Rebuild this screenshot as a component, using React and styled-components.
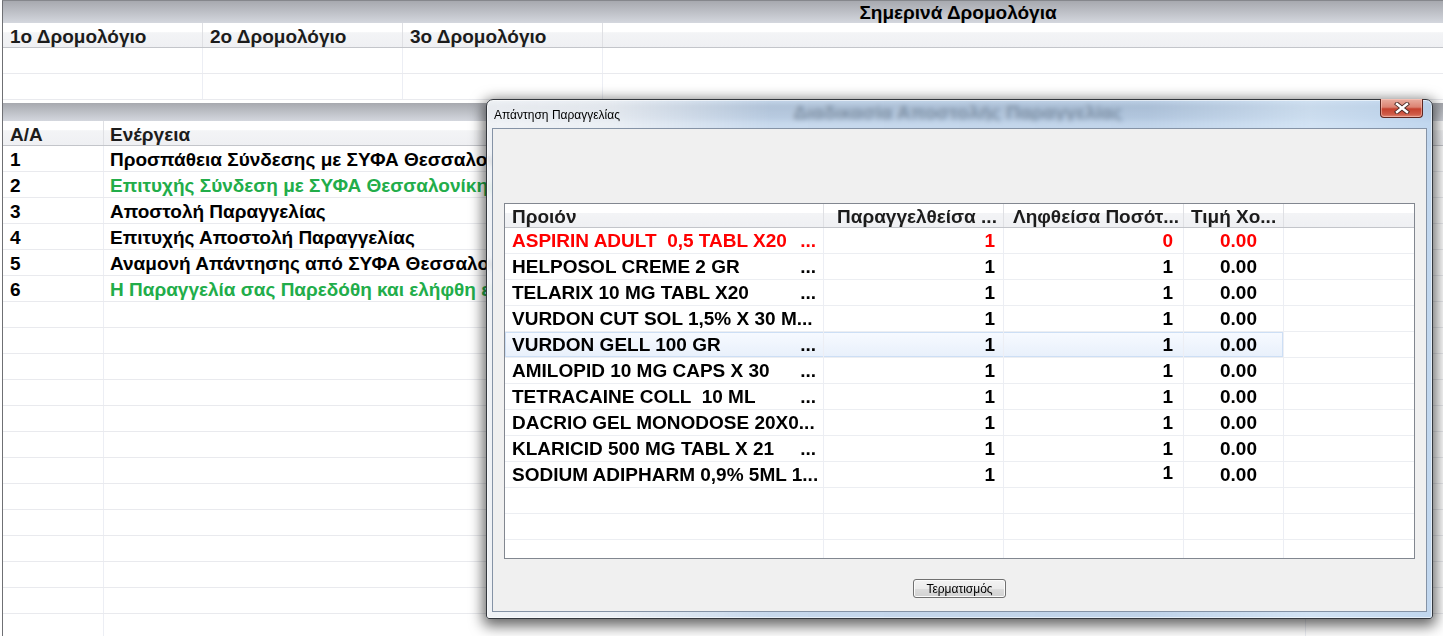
import React from "react";
import styled, { createGlobalStyle } from "styled-components";

const FONT = `"Liberation Sans", Arial, "DejaVu Sans", sans-serif`;

const GlobalStyle = createGlobalStyle`
  html, body {
    margin: 0;
    padding: 0;
    background: #fff;
    overflow: hidden;
  }
  body {
    font-family: ${FONT};
    color: #000;
  }
  * {
    box-sizing: border-box;
  }
`;

const routes = ["1ο Δρομολόγιο", "2ο Δρομολόγιο", "3ο Δρομολόγιο", ""];

const steps = [
  { n: 1, text: "Προσπάθεια Σύνδεσης με ΣΥΦΑ Θεσσαλονίκης" },
  { n: 2, text: "Επιτυχής Σύνδεση με ΣΥΦΑ Θεσσαλονίκης", ok: true },
  { n: 3, text: "Αποστολή Παραγγελίας" },
  { n: 4, text: "Επιτυχής Αποστολή Παραγγελίας" },
  { n: 5, text: "Αναμονή Απάντησης από ΣΥΦΑ Θεσσαλονίκης" },
  { n: 6, text: "Η Παραγγελία σας Παρεδόθη και ελήφθη επιτυχώς", ok: true },
];

const products = [
  { name: "ASPIRIN ADULT  0,5 TABL X20", pad: true, got: 0, red: true },
  { name: "HELPOSOL CREME 2 GR", pad: true },
  { name: "TELARIX 10 MG TABL X20", pad: true },
  { name: "VURDON CUT SOL 1,5% X 30 M..." },
  { name: "VURDON GELL 100 GR", pad: true, sel: true },
  { name: "AMILOPID 10 MG CAPS X 30", pad: true },
  { name: "TETRACAINE COLL  10 ML", pad: true },
  { name: "DACRIO GEL MONODOSE 20X0..." },
  { name: "KLARICID 500 MG TABL X 21", pad: true },
  { name: "SODIUM ADIPHARM 0,9% 5ML 1...", lift: true },
];

const TOP_COLS = "200px 200px 200px 1fr";
const LOG_COLS = "101px 1202px 1fr";
const DLG_COLS = "319px 180px 180px 100px 1fr";

const Screen = styled.div`
  position: relative;
  width: 1443px;
  height: 636px;
  overflow: hidden;
  background: #fff;
`;

const Page = styled.div`
  width: 1911px;
  height: 636px;
  margin-left: 2px;
  border-left: 1px solid #6f7074;
  border-top: 1px solid #85878c;
  display: flex;
  flex-direction: column;
`;

const PanelBar = styled.div`
  flex: none;
  height: ${(p) => p.$h}px;
  margin-top: ${(p) => p.$gap || 0}px;
  padding-top: 1px;
  display: flex;
  align-items: center;
  justify-content: center;
  background: linear-gradient(#a7a9af, #d4d7de);
  font-size: 19px;
  font-weight: 700;
  color: #000;
`;

const HeadRow = styled.div`
  flex: none;
  display: grid;
  grid-template-columns: ${(p) => p.$cols};
  height: ${(p) => p.$h || 25}px;
  background: linear-gradient(#ffffff 0%, #ffffff 38%, #f3f4f6 40%, #eff0f3 100%);
  border-bottom: 1px solid #c3c5ca;
`;

const HeadCell = styled.div`
  padding-left: ${(p) => p.$pad || 7}px;
  padding-top: ${(p) => p.$top ?? 3}px;
  border-right: 1px solid ${(p) => (p.$last ? "transparent" : "#dfe0e4")};
  font-size: 19px;
  font-weight: 700;
  color: #1c1c1c;
  display: flex;
  align-items: center;
  white-space: nowrap;
  overflow: hidden;
`;

const Rows = styled.div`
  flex: 1;
  overflow: hidden;
`;

const Row = styled.div`
  display: grid;
  grid-template-columns: ${(p) => p.$cols};
  height: 26px;
  border-bottom: 1px solid #e9eaee;
`;

const Cell = styled.div`
  padding-left: ${(p) => p.$pad || 7}px;
  padding-top: 2px;
  border-right: 1px solid ${(p) => (p.$last ? "transparent" : "#eceef4")};
  font-size: 19px;
  font-weight: 700;
  color: ${(p) => (p.$ok ? "#22ad4a" : "#000")};
  display: flex;
  align-items: center;
  white-space: nowrap;
  overflow: hidden;
`;

/* dialog window */

const Dialog = styled.div`
  position: absolute;
  left: 486px;
  top: 99px;
  width: 947px;
  height: 520px;
  padding: 0 5px 6px;
  display: flex;
  flex-direction: column;
  border: 1px solid #34383e;
  border-radius: 7px 7px 3px 3px;
  background: linear-gradient(
    90deg,
    rgba(238, 241, 245, 0.9) 0%,
    rgba(232, 237, 243, 0.88) 13%,
    rgba(176, 201, 229, 0.7) 30%,
    rgba(168, 195, 225, 0.72) 70%,
    rgba(204, 223, 242, 0.88) 87%,
    rgba(184, 209, 236, 0.88) 100%
  );
  backdrop-filter: blur(2.5px);
  box-shadow: 0 4px 14px 3px rgba(0, 0, 0, 0.6), inset 0 0 0 1px rgba(255, 255, 255, 0.55);
`;

const TitleBar = styled.div`
  flex: none;
  height: 28px;
  padding: 2px 0 0 2px;
  display: flex;
  align-items: center;
  font-size: 12px;
  color: #000;
`;

const CloseButton = styled.div`
  position: absolute;
  top: -1px;
  right: 9px;
  width: 43px;
  height: 19px;
  display: flex;
  align-items: center;
  justify-content: center;
  border: 1px solid #5e2620;
  border-top: none;
  border-radius: 0 0 4px 4px;
  background: linear-gradient(#e9ad9f 0%, #dc8373 45%, #c5412e 55%, #cf5b47 85%, #e08a78 100%);
  box-shadow: inset 0 0 0 1px rgba(255, 210, 200, 0.5);
`;

const Client = styled.div`
  flex: 1;
  display: flex;
  flex-direction: column;
  padding: 74px 11px 0;
  background: #f0f0f0;
  border: 1px solid #8593a6;
`;

const Table = styled.div`
  height: 356px;
  display: flex;
  flex-direction: column;
  border: 1px solid #828790;
  background: #fff;
  overflow: hidden;
`;

const ItemRow = styled(Row)`
  height: 26px;
  border-bottom: 1px solid #eceef2;
`;

const ItemCell = styled.div`
  padding: 1px ${(p) => p.$right || 7}px 0 7px;
  border-right: 1px solid ${(p) => (p.$last ? "transparent" : "#eceef4")};
  font-size: 19px;
  font-weight: 700;
  color: ${(p) => (p.$red ? "#ff0000" : "#000")};
  display: flex;
  align-items: center;
  justify-content: ${(p) => (p.$num ? "flex-end" : "flex-start")};
  white-space: pre;
  overflow: hidden;
  background: ${(p) => (p.$sel ? "linear-gradient(#f7faff, #e8f0fb)" : "transparent")};
  box-shadow: ${(p) =>
    p.$sel
      ? `inset 0 1px #cddff5, inset 0 -1px #cddff5${p.$first ? ", inset 1px 0 #cddff5" : ""}${
          p.$end ? ", inset -1px 0 #cddff5" : ""
        }`
      : "none"};
`;

const Dots = styled.span`
  margin-left: auto;
`;

const Lifted = styled.span`
  position: relative;
  top: -2px;
`;

const Footer = styled.div`
  display: flex;
  justify-content: center;
  padding-top: 20px;
`;

const Button = styled.button`
  width: 93px;
  height: 19px;
  padding: 0;
  border: 1px solid #707070;
  border-radius: 3px;
  background: linear-gradient(#f3f3f3 0%, #ebebeb 50%, #dddddd 51%, #d1d1d1 100%);
  box-shadow: inset 0 0 0 1px #fbfbfb;
  font: 12px ${FONT};
  color: #000;
`;

const CloseGlyph = () => (
  <svg width="16" height="12" viewBox="0 0 16 12">
    <path d="M3 2 L13 10 M13 2 L3 10" stroke="#4a2a26" strokeWidth="4.2" strokeLinecap="square" />
    <path d="M3 2 L13 10 M13 2 L3 10" stroke="#ffffff" strokeWidth="2.4" strokeLinecap="square" />
  </svg>
);

const App = () => {
  return (
    <Screen>
      <GlobalStyle />
      <Page>
        <PanelBar $h={22}>Σημερινά Δρομολόγια</PanelBar>
        <HeadRow $cols={TOP_COLS}>
          {routes.map((r, i) => (
            <HeadCell key={i} $last={i === routes.length - 1}>
              {r}
            </HeadCell>
          ))}
        </HeadRow>
        {[0, 1].map((i) => (
          <Row key={i} $cols={TOP_COLS}>
            {routes.map((r, j) => (
              <Cell key={j} $last={j === routes.length - 1} />
            ))}
          </Row>
        ))}

        <PanelBar $h={18} $gap={3}>
          Διαδικασία Αποστολής Παραγγελίας
        </PanelBar>
        <HeadRow $cols={LOG_COLS} $h={25}>
          <HeadCell>Α/Α</HeadCell>
          <HeadCell $pad={6}>Ενέργεια</HeadCell>
          <HeadCell $last />
        </HeadRow>
        <Rows>
          {Array.from({ length: 20 }).map((_, i) => {
            const s = steps[i];
            return (
              <Row key={i} $cols={LOG_COLS}>
                <Cell>{s ? s.n : ""}</Cell>
                <Cell $pad={6} $ok={s && s.ok}>
                  {s ? s.text : ""}
                </Cell>
                <Cell $last />
              </Row>
            );
          })}
        </Rows>
      </Page>

      <Dialog>
        <TitleBar>Απάντηση Παραγγελίας</TitleBar>
        <CloseButton>
          <CloseGlyph />
        </CloseButton>
        <Client>
          <Table>
            <HeadRow $cols={DLG_COLS} $h={24}>
              <HeadCell $top={2}>Προιόν</HeadCell>
              <HeadCell $top={2} $pad={13}>Παραγγελθείσα ...</HeadCell>
              <HeadCell $top={2} $pad={9}>Ληφθείσα Ποσότ...</HeadCell>
              <HeadCell $top={2} $pad={7}>Τιμή Χο...</HeadCell>
              <HeadCell $top={2} $last />
            </HeadRow>
            <Rows>
              {Array.from({ length: 13 }).map((_, i) => {
                const p = products[i];
                if (!p) {
                  return (
                    <ItemRow key={i} $cols={DLG_COLS}>
                      <ItemCell />
                      <ItemCell />
                      <ItemCell />
                      <ItemCell />
                      <ItemCell $last />
                    </ItemRow>
                  );
                }
                const got = p.got === undefined ? 1 : p.got;
                return (
                  <ItemRow key={i} $cols={DLG_COLS}>
                    <ItemCell $red={p.red} $sel={p.sel} $first>
                      {p.name}
                      {p.pad && <Dots>...</Dots>}
                    </ItemCell>
                    <ItemCell $num $right={8} $red={p.red} $sel={p.sel}>
                      1
                    </ItemCell>
                    <ItemCell $num $right={10} $red={p.red} $sel={p.sel}>
                      {p.lift ? <Lifted>{got}</Lifted> : got}
                    </ItemCell>
                    <ItemCell $num $right={26} $red={p.red} $sel={p.sel} $end>
                      0.00
                    </ItemCell>
                    <ItemCell $last />
                  </ItemRow>
                );
              })}
            </Rows>
          </Table>
          <Footer>
            <Button>Τερματισμός</Button>
          </Footer>
        </Client>
      </Dialog>
    </Screen>
  );
};

export default App;
